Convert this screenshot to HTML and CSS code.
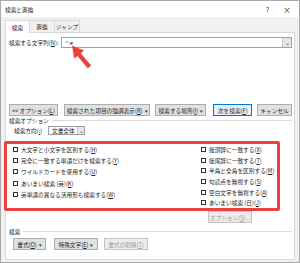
FILE: index.html
```html
<!DOCTYPE html>
<html lang="ja">
<head>
    <meta charset="UTF-8">
    <title>検索と置換</title>
    <link rel="stylesheet" href="styles.css">
</head>
<body>

<div class="dialog">
    <div class="titlebar">
        <span class="title">検索と置換</span>
        <span class="help">?</span>
        <span class="close">×</span>
    </div>

    <div class="tabs">
        <div class="tab active">検索</div>
        <div class="tab">置換</div>
        <div class="tab">ジャンプ</div>
    </div>

    <div class="panel">
        <div class="find-row">
            <span class="find-label">検索する文字列(<u>N</u>):</span>
            <div class="combo">
                <span class="combo-text">^#</span>
                <span class="combo-drop">⌄</span>
            </div>
        </div>

        <div class="btn-row main-btns">
            <div class="btn w-less">&lt;&lt; オプション(<u>L</u>)</div>
            <div class="btn w-high">検索された項目の強調表示(<u>R</u>) <span class="caret">▾</span></div>
            <div class="btn w-where">検索する場所(<u>I</u>) <span class="caret">▾</span></div>
            <div class="btn default w-next">次を検索(<u>F</u>)</div>
            <div class="btn w-cancel">キャンセル</div>
        </div>

        <div class="group-head"><span>検索オプション</span></div>

        <div class="dir-row">
            <span class="dir-label">検索方向(<u>:</u>)</span>
            <div class="select">
                <span class="select-text">文書全体</span>
                <span class="select-drop">⌄</span>
            </div>
        </div>

        <div class="highlight">
            <div class="col">
                <div class="check"><span class="box"></span>大文字と小文字を区別する(<u>H</u>)</div>
                <div class="check"><span class="box"></span>完全に一致する単語だけを検索する(<u>Y</u>)</div>
                <div class="check"><span class="box"></span>ワイルドカードを使用する(<u>U</u>)</div>
                <div class="check"><span class="box"></span>あいまい検索 (英)(<u>K</u>)</div>
                <div class="check"><span class="box"></span>英単語の異なる活用形も検索する(<u>W</u>)</div>
            </div>
            <div class="col right">
                <div class="check"><span class="box"></span>接頭辞に一致する(<u>X</u>)</div>
                <div class="check"><span class="box"></span>接尾辞に一致する(<u>T</u>)</div>
                <div class="check"><span class="box"></span>半角と全角を区別する(<u>M</u>)</div>
                <div class="check"><span class="box"></span>句読点を無視する(<u>S</u>)</div>
                <div class="check"><span class="box"></span>空白文字を無視する(<u>A</u>)</div>
                <div class="check"><span class="box"></span>あいまい検索 (日)(<u>J</u>)</div>
            </div>
        </div>

        <div class="opt-row">
            <div class="btn disabled w-opt">オプション(<u>S</u>)...</div>
        </div>

        <div class="group-head"><span>検索</span></div>

        <div class="btn-row bottom-btns">
            <div class="btn w-format">書式(<u>O</u>) <span class="caret">▾</span></div>
            <div class="btn w-special">特殊文字(<u>E</u>) <span class="caret">▾</span></div>
            <div class="btn disabled w-clear">書式の削除(<u>T</u>)</div>
        </div>
    </div>

    <!-- annotation arrow drawn over the dialog -->
    <svg class="arrow" width="300" height="263" viewBox="0 0 300 263">
        <polygon points="72,45.5 84,50.5 80.8,53.3 91.2,65.4 87.8,68.2 77.4,56 74.2,58.8" fill="#e8423c"/>
    </svg>
</div>

</body>
</html>
```

FILE: styles.css
```css
* {
    box-sizing: border-box;
}
body {
    margin: 0;
    padding: 0;
    background-color: #fff;
}
.dialog {
    position: relative;
    width: 300px;
    height: 263px;
    border: 1px solid #a8a8a8;
    background-color: #f0f0f0;
    font-family: "Noto Sans CJK JP", "Noto Sans", sans-serif;
    font-size: 5.7px;
    color: #262626;
    overflow: hidden;
}
u {
    text-decoration: underline;
}
.titlebar {
    display: flex;
    align-items: center;
    height: 16px;
    padding: 0 4px;
    background-color: #fff;
}
.title {
    flex: 1;
}
.help {
    font-size: 6.5px;
    margin-right: 14px;
}
.close {
    font-size: 8px;
    margin-right: 4px;
}
.tabs {
    display: flex;
    margin-top: 2px;
    padding-left: 4px;
    height: 13px;
}
.tab {
    width: 25px;
    display: flex;
    align-items: center;
    justify-content: center;
    border: 1px solid #d9d9d9;
    border-bottom: none;
    border-left: none;
    background-color: #f0f0f0;
    margin-top: 1px;
}
.tab:first-child {
    border-left: 1px solid #d9d9d9;
}
.tab.active {
    background-color: #fff;
    margin-top: 0;
    position: relative;
    top: 1px;
    height: 13px;
}
.panel {
    margin: 0 4px;
    height: 228px;
    background-color: #fff;
    border: 1px solid #d9d9d9;
    padding: 0 2px;
}
.find-row {
    display: flex;
    align-items: center;
    margin-top: 4px;
    height: 11px;
}
.find-label {
    width: 53px;
    padding-left: 1px;
}
.combo {
    flex: 1;
    height: 11px;
    display: flex;
    align-items: center;
    border: 1px solid #a0a0a0;
    padding: 0 0 0 3px;
}
.combo-text {
    flex: 1;
    font-family: "DejaVu Sans", sans-serif;
    font-size: 5px;
}
.combo-drop, .select-drop {
    width: 9px;
    height: 9px;
    display: flex;
    align-items: center;
    justify-content: center;
    background-color: #e5e5e5;
    border-left: 1px solid #c8c8c8;
    font-size: 6px;
    color: #555;
    line-height: 1;
}
.btn-row {
    display: flex;
}
.main-btns {
    margin-top: 56px;
    padding-left: 1px;
}
.btn {
    height: 12px;
    display: flex;
    align-items: center;
    justify-content: center;
    background-color: #e1e1e1;
    border: 1px solid #adadad;
    white-space: nowrap;
}
.btn.default {
    border-color: #0078d7;
    background-color: #e5f1fb;
}
.btn.disabled {
    background-color: #ececec;
    border-color: #c4c4c4;
    color: #a0a0a0;
}
.caret {
    font-size: 5px;
    margin-left: 2px;
}
.w-less { width: 49px; margin-right: 6px; }
.w-high { width: 87px; margin-right: 5px; }
.w-where { width: 51px; margin-right: 7px; }
.w-next { width: 39px; margin-right: 5px; }
.w-cancel { width: 35px; }
.group-head {
    display: flex;
    align-items: center;
    height: 8px;
    padding-left: 1px;
}
.group-head::after {
    content: "";
    flex: 1;
    height: 1px;
    background-color: #dcdcdc;
    margin-left: 3px;
}
.dir-row {
    display: flex;
    align-items: center;
    margin-top: 2px;
    padding-left: 6px;
    height: 9px;
}
.dir-label {
    width: 34px;
}
.select {
    width: 37px;
    height: 9px;
    display: flex;
    align-items: center;
    border: 1px solid #a0a0a0;
    padding-left: 3px;
}
.select-text {
    flex: 1;
}
.select-drop {
    width: 7px;
    height: 7px;
}
.highlight {
    display: flex;
    margin: 6px 0 0 -4px;
    width: 276px;
    height: 70px;
    border: 3px solid #e8423c;
    border-radius: 2px;
    padding: 0 0 0 6px;
}
.col {
    display: flex;
    flex-direction: column;
    flex: 1;
}
.col.right {
    flex: none;
    width: 76px;
}
.check {
    display: flex;
    align-items: center;
    height: 11.2px;
    white-space: nowrap;
}
.box {
    width: 5px;
    height: 5px;
    border: 1px solid #333;
    background-color: #fff;
    margin-right: 3px;
}
.opt-row {
    display: flex;
    justify-content: flex-end;
    padding-right: 40px;
}
.w-opt { width: 44px; }
.group-head + .bottom-btns {
    margin-top: 3px;
}
.opt-row + .group-head {
    margin-top: 4px;
}
.bottom-btns {
    padding-left: 5px;
}
.w-format { width: 33px; margin-right: 8px; }
.w-special { width: 44px; margin-right: 6px; }
.w-clear { width: 44px; }
.arrow {
    position: absolute;
    left: -1px;
    top: -1px;
    pointer-events: none;
}
```
